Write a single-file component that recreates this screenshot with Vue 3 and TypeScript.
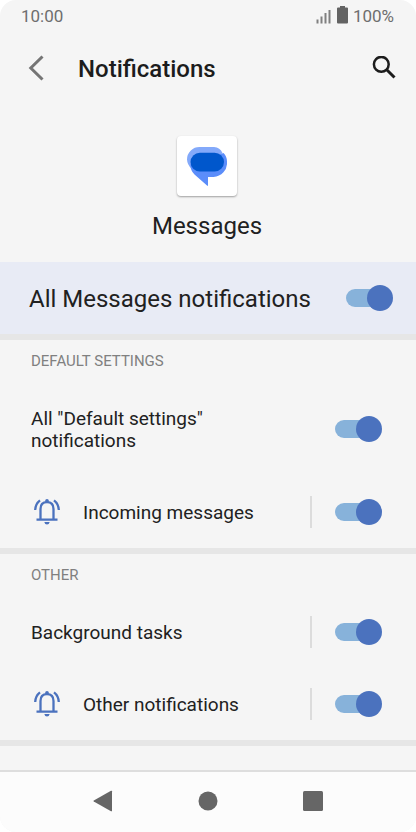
<script setup lang="ts">
import { reactive, ref } from 'vue'

interface Channel {
  id: string
  label: string
  enabled: boolean
  bell?: boolean
  separated?: boolean
  tall?: boolean
}

interface Group {
  title: string
  channels: Channel[]
}

const allEnabled = ref(true)

const groups = reactive<Group[]>([
  {
    title: 'DEFAULT SETTINGS',
    channels: [
      { id: 'default-all', label: 'All "Default settings" notifications', enabled: true, tall: true },
      { id: 'incoming', label: 'Incoming messages', enabled: true, bell: true, separated: true },
    ],
  },
  {
    title: 'OTHER',
    channels: [
      { id: 'background', label: 'Background tasks', enabled: true, separated: true },
      { id: 'other', label: 'Other notifications', enabled: true, bell: true, separated: true },
    ],
  },
])
</script>

<template>
  <div class="screen">
    <div class="status">
      <span>10:00</span>
      <span class="status-right">
        <svg class="signal" width="16" height="16" viewBox="0 0 16 16" aria-hidden="true">
          <path d="M1.500 11.500v4M5.500 8.500v7M9.500 5v10.500M13.500 2v13.500" stroke="#808080" stroke-width="2" />
        </svg>
        <svg class="battery" width="11" height="18" viewBox="0 0 11 18" aria-hidden="true">
          <path d="M3 0h5v1.500h2q1 0 1 1V16.500q0 1-1 1H1q-1 0-1-1V2.500q0-1 1-1h2z" fill="#636363" />
        </svg>
        <span>100%</span>
      </span>
    </div>

    <header class="bar">
      <button class="icon-button" type="button" aria-label="Back">
        <svg width="16" height="26" viewBox="0 0 16 26">
          <path d="M14.500 1.500 2.800 13l11.700 11.500" fill="none" stroke="#757575" stroke-width="3" />
        </svg>
      </button>
      <h1>Notifications</h1>
      <button class="icon-button" type="button" aria-label="Search">
        <svg width="24" height="24" viewBox="0 0 24 24">
          <circle cx="9.300" cy="8.300" r="7.400" fill="none" stroke="#1c1c1c" stroke-width="2.500" />
          <path d="m14.500 13.500 8 8" stroke="#1c1c1c" stroke-width="3" />
        </svg>
      </button>
    </header>

    <main>
      <div class="app">
        <div class="app-icon">
          <svg width="40" height="40" viewBox="0 0 40 40" aria-hidden="true">
            <path d="M13 1h14a10 10 0 0 1 8.500 6L12 25 4.500 22.500A12.500 12.500 0 0 1 0 13.500 12.500 12.500 0 0 1 13 1z" fill="#83a9fa" />
            <path d="M36.500 7a12.500 12.500 0 0 1 3.500 9A14 14 0 0 1 26.500 31H21v8q0 1.500-1 .6L7.500 28.500A13 13 0 0 1 3.500 18z" fill="#5b8dfa" />
            <rect x="3.500" y="6.700" width="33.500" height="18.800" rx="9.400" fill="#0057cc" />
          </svg>
        </div>
        <h2>Messages</h2>
      </div>

      <label class="master" for="all-messages">
        <span>All Messages notifications</span>
        <input id="all-messages" v-model="allEnabled" class="switch" type="checkbox" role="switch" />
      </label>

      <section v-for="group in groups" :key="group.title" class="group">
        <h3>{{ group.title }}</h3>
        <div v-for="channel in group.channels" :key="channel.id" class="row" :class="{ tall: channel.tall }">
          <svg v-if="channel.bell" class="bell" width="26" height="26" viewBox="0 0 26 26" aria-hidden="true">
            <g fill="none" stroke="#4b72be" stroke-width="2.300">
              <path d="M1.200 11Q1.500 4.800 6 1.400M24.800 11Q24.500 4.800 20 1.400" />
              <path d="M6.500 20.500V10Q6.500 3.200 13 3.200T19.500 10V20.500M2.500 20.700H23.500" />
            </g>
            <path d="M11.200 3V1.500a1.800 1.500 0 0 1 3.600 0V3zM10.300 23h5.400q-.6 2.500-2.700 2.500T10.300 23z" fill="#4b72be" />
          </svg>
          <label :for="channel.id">{{ channel.label }}</label>
          <span v-if="channel.separated" class="separator"></span>
          <input :id="channel.id" v-model="channel.enabled" class="switch" type="checkbox" role="switch" />
        </div>
      </section>
    </main>

    <nav class="nav">
      <button type="button" aria-label="Back">
        <svg width="20" height="22" viewBox="0 0 20 22"><path d="M18 .8q1-.5 1 .5v19.400q0 1-1 .5L.8 11.500q-.8-.5 0-1z" fill="#666" /></svg>
      </button>
      <button type="button" aria-label="Home">
        <svg width="20" height="20" viewBox="0 0 20 20"><circle cx="10" cy="10" r="9.500" fill="#666" /></svg>
      </button>
      <button type="button" aria-label="Recent apps">
        <svg width="20" height="20" viewBox="0 0 20 20"><rect width="20" height="20" rx="1.500" fill="#666" /></svg>
      </button>
    </nav>
  </div>
</template>

<style>
body {
  background: #fff;
}
</style>

<style scoped>
.screen {
  box-sizing: border-box;
  min-height: 100vh;
  display: flex;
  flex-direction: column;
  overflow: hidden;
  border-radius: 16px;
  background: #f5f5f5;
  color: #212121;
  font-family: Roboto, "Liberation Sans", sans-serif;
}

h1,
h2,
h3 {
  margin: 0;
}

button {
  padding: 0;
  border: 0;
  background: none;
}

svg {
  display: block;
}

.status {
  display: flex;
  align-items: center;
  justify-content: space-between;
  height: 32px;
  padding: 0 22px 0 21px;
  color: #6e6e6e;
  font-size: 17px;
}

.status-right {
  display: flex;
  align-items: center;
}

.signal,
.battery {
  margin-right: 5px;
}

.battery {
  margin-bottom: 2px;
}

.bar {
  display: flex;
  align-items: center;
  height: 72px;
  padding: 0 20px 0 28px;
}

.bar h1 {
  flex: 1;
  margin-left: 34px;
  padding-top: 2px;
  color: #1c1c1c;
  font-size: 24px;
  font-weight: 500;
  line-height: 32px;
}

.app {
  display: flex;
  flex-direction: column;
  align-items: center;
  gap: 14px;
  padding: 32px 2px 20px 0;
}

.app-icon {
  display: grid;
  place-items: center;
  width: 60px;
  height: 60px;
  border-radius: 4px;
  background: #fff;
  box-shadow: 0 1px 2px rgba(0, 0, 0, 0.35);
}

.app h2 {
  font-size: 24px;
  font-weight: 400;
  line-height: 32px;
}

.master {
  display: flex;
  align-items: center;
  justify-content: space-between;
  height: 72px;
  padding: 0 23px 0 29px;
  border-bottom: 6px solid #e6e6e6;
  background: #e8ebf5;
  font-size: 24px;
}

.master span {
  padding-top: 2px;
}

.group {
  border-bottom: 6px solid #e6e6e6;
}

.group h3 {
  padding: 0 31px;
  color: #808080;
  font-size: 15px;
  font-weight: 400;
  line-height: 42px;
}

.row {
  display: flex;
  align-items: center;
  height: 72px;
  padding: 0 34px 0 31px;
  font-size: 19px;
  line-height: 22px;
}

.tall {
  height: 94px;
}

.row label {
  flex: 1;
  padding-top: 2px;
}

.tall label {
  padding-right: 104px;
}

.bell {
  margin: 0 23px 0 3px;
}

.separator {
  width: 2px;
  height: 32px;
  margin-right: 23px;
  background: #dcdcdc;
}

.switch {
  appearance: none;
  display: grid;
  flex: none;
  align-items: center;
  width: 47px;
  height: 26px;
  margin: 0;
}

.switch::before,
.switch::after {
  content: "";
  grid-area: 1 / 1;
}

.switch::before {
  width: 42px;
  height: 18px;
  border-radius: 9px;
  background: #b5b5b5;
}

.switch::after {
  width: 26px;
  height: 26px;
  border-radius: 50%;
  background: #f1f1f1;
}

.switch:checked::before {
  background: #87b2da;
}

.switch:checked::after {
  justify-self: end;
  background: #4b72be;
}

.nav {
  display: grid;
  grid-template-columns: repeat(3, 1fr);
  height: 58px;
  margin-top: auto;
  padding: 0 51px 2px;
  border-top: 2px solid #dedede;
  background: #fcfcfc;
}

.nav button {
  display: grid;
  place-items: center;
}
</style>
